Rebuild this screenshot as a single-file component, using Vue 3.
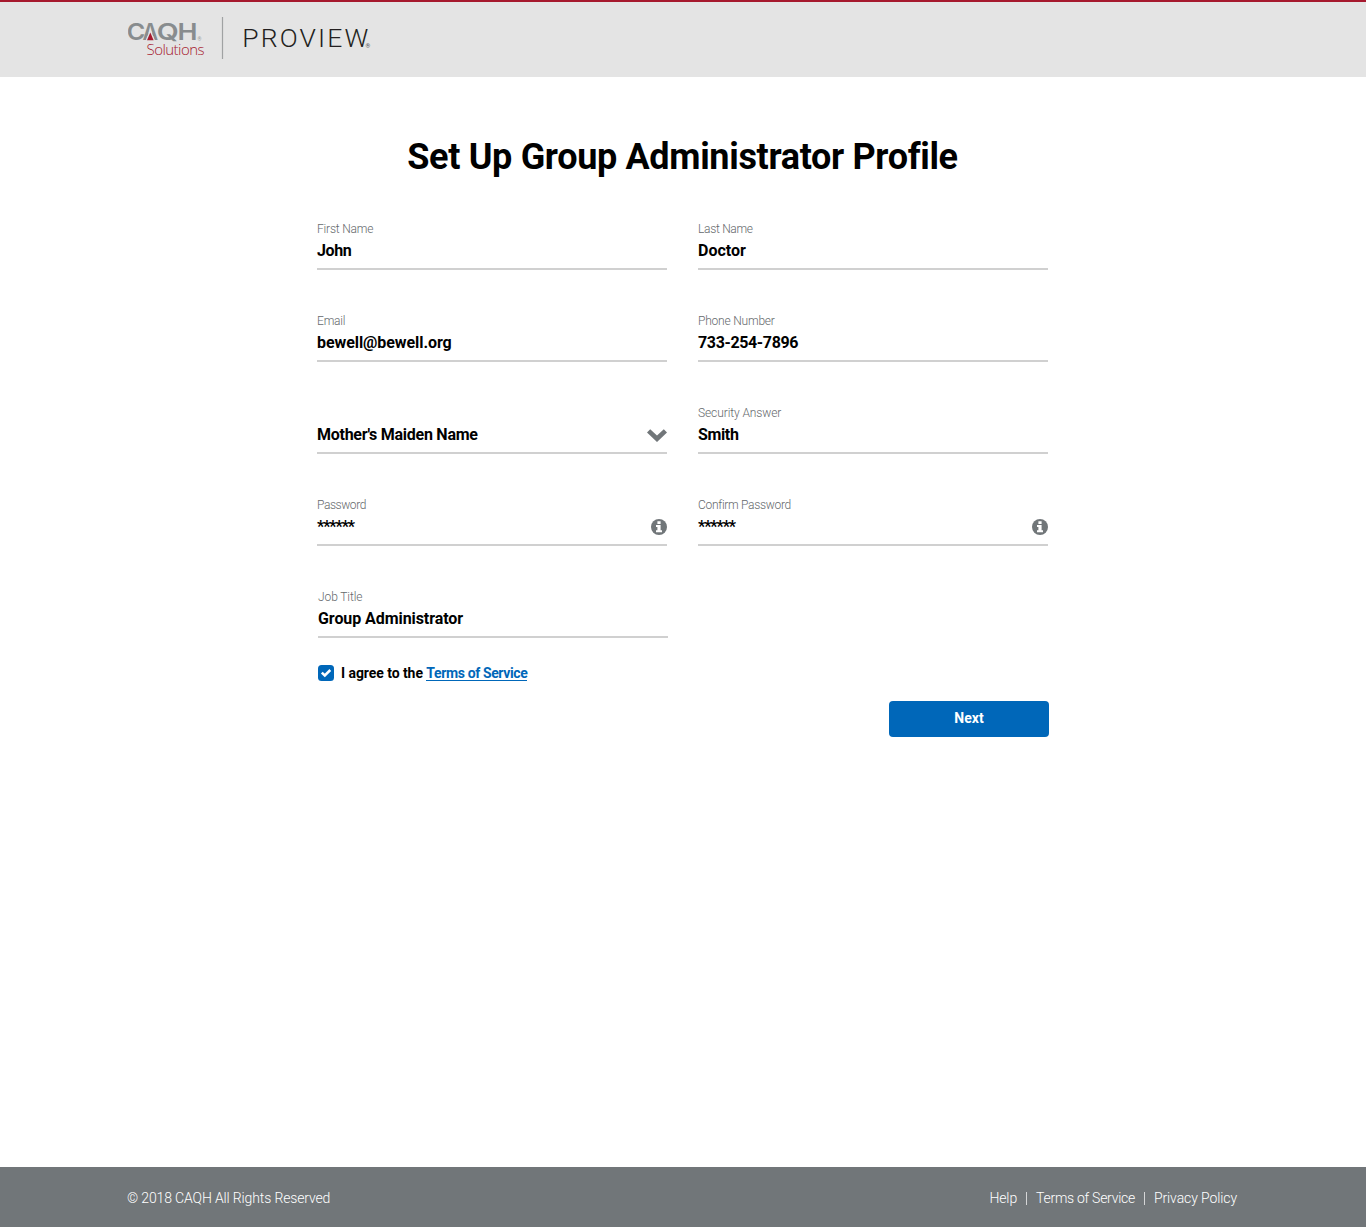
<script setup>
const rows = [
  [
    { id: 'first', label: 'First Name', value: 'John' },
    { id: 'last', label: 'Last Name', value: 'Doctor' },
  ],
  [
    { id: 'email', label: 'Email', value: 'bewell@bewell.org' },
    { id: 'phone', label: 'Phone Number', value: '733-254-7896' },
  ],
  [
    { id: 'question', label: '', value: "Mother's Maiden Name", icon: 'chevron' },
    { id: 'answer', label: 'Security Answer', value: 'Smith' },
  ],
  [
    { id: 'password', label: 'Password', value: '******', icon: 'info' },
    { id: 'confirm', label: 'Confirm Password', value: '******', icon: 'info' },
  ],
  [{ id: 'job', label: 'Job Title', value: 'Group Administrator' }],
]
</script>

<template>
  <div class="page">
    <header class="header">
      <svg class="brand" width="250" height="46" viewBox="0 0 250 46">
        <g class="caqh">
          <text x="-1.2" y="25.3" textLength="18.5" lengthAdjust="spacingAndGlyphs">C</text>
          <text x="14.6" y="25.3" textLength="15.6" lengthAdjust="spacingAndGlyphs">A</text>
          <text x="28.8" y="25.3" textLength="22" lengthAdjust="spacingAndGlyphs">Q</text>
          <text x="49.6" y="25.3" textLength="20" lengthAdjust="spacingAndGlyphs">H</text>
        </g>
        <path d="M22.3 15.5 L18.4 25.5 H26.2 Z" fill="#e4e4e4" stroke="#e4e4e4" stroke-width="1.2" />
        <path d="M22.3 17.5 L19 25.3 H25.6 Z" fill="#a6192e" />
        <text class="reg" x="69.5" y="25.5">®</text>
        <text class="solutions" x="18.5" y="40.3" textLength="58">Solutions</text>
        <path d="M94.5 2 V44" stroke="#a0a2a3" stroke-width="1.2" />
        <text class="proview" x="114.2" y="32.2" textLength="126">PROVIEW</text>
        <text class="reg dark" x="237.6" y="32.5">®</text>
      </svg>
    </header>

    <main class="content">
      <h1>Set Up Group Administrator Profile</h1>
      <form class="form" @submit.prevent>
        <div v-for="(row, i) in rows" :key="i" class="row">
          <div v-for="field in row" :key="field.id" class="field" :class="field.id">
            <div class="label">{{ field.label }}</div>
            <div class="control">
              <span class="value">{{ field.value }}</span>
              <svg v-if="field.icon === 'chevron'" class="chevron" width="20" height="13" viewBox="0 0 20 13">
                <path d="M3.2 0.3 L10 6.4 L16.8 0.3 L20 3.5 L10 13 L0 3.5 Z" fill="#717679" />
              </svg>
              <svg v-if="field.icon === 'info'" class="info" width="16" height="16" viewBox="0 0 16 16">
                <circle cx="8" cy="8" r="8" fill="#717679" />
                <path d="M6.4 2.2 H9.6 V4.9 H6.4 Z M5 6 H9.6 V11.3 H11 V13.3 H5 V11.3 H6.4 V8 H5 Z" fill="#fff" />
              </svg>
            </div>
          </div>
        </div>
        <div class="agree">
          <svg width="16" height="16" viewBox="0 0 16 16">
            <rect width="16" height="16" rx="3.5" fill="#0067b9" />
            <path d="M3.8 7.6 L6.8 10.5 L12.3 5" fill="none" stroke="#fff" stroke-width="2.5" />
          </svg>
          <span class="terms">I agree to the <a>Terms of Service</a></span>
        </div>
        <button class="next" type="submit">Next</button>
      </form>
    </main>

    <footer class="footer">
      <span class="copyright">© 2018 CAQH All Rights Reserved</span>
      <nav class="links">
        <a class="help">Help</a>
        <i></i>
        <a class="tos">Terms of Service</a>
        <i></i>
        <a class="privacy">Privacy Policy</a>
      </nav>
    </footer>
  </div>
</template>

<style>
body {
  margin: 0;
}
</style>

<style scoped>
.page {
  display: flex;
  flex-direction: column;
  height: 1227px;
  background: #fff;
  color: #000;
  font-family: Roboto, "Liberation Sans", sans-serif;
}
.header {
  box-sizing: border-box;
  height: 77px;
  flex: none;
  padding: 13px 0 0 128px;
  border-top: 2px solid #a6192e;
  background: #e4e4e4;
}
.brand {
  display: block;
}
.caqh {
  font-family: Inter, sans-serif;
  font-size: 23px;
  font-weight: 600;
  fill: #888c8e;
}
.reg {
  font-size: 5px;
  fill: #9a9c9e;
}
.reg.dark {
  font-size: 6px;
  fill: #555;
}
.solutions {
  font-family: "Open Sans", sans-serif;
  font-size: 15px;
  font-weight: 300;
  fill: #a6192e;
}
.proview {
  font-size: 26.5px;
  font-weight: 300;
  fill: #231f20;
}
.content {
  flex: 1;
  width: 731px;
  margin-left: 317px;
}
h1 {
  margin: 58px 0 0;
  line-height: 44px;
  font-size: 36px;
  font-weight: 700;
  letter-spacing: -0.33px;
  text-align: center;
  white-space: nowrap;
}
.form {
  display: flex;
  flex-direction: column;
  padding-top: 43px;
}
.row {
  display: flex;
  gap: 31px;
  height: 92px;
}
.field {
  width: 350px;
}
.field.job {
  margin-left: 1px;
}
.label {
  height: 14px;
  line-height: 14px;
  font-size: 12px;
  font-weight: 300;
  letter-spacing: -0.2px;
  color: #65696c;
}
.last .label,
.confirm .label {
  letter-spacing: -0.3px;
}
.password .label {
  letter-spacing: -0.42px;
}
.answer .label,
.job .label {
  letter-spacing: -0.1px;
}
.control {
  display: flex;
  justify-content: space-between;
  align-items: center;
  height: 32px;
  border-bottom: 2px solid #d0d0d0;
}
.value {
  line-height: 20px;
  margin-bottom: 3px;
  font-size: 16px;
  font-weight: 700;
}
.first .value,
.phone .value,
.answer .value {
  letter-spacing: -0.36px;
}
.email .value,
.job .value {
  letter-spacing: -0.07px;
}
.question .value {
  letter-spacing: -0.26px;
}
.password .value,
.confirm .value {
  letter-spacing: -1.1px;
}
.chevron,
.info {
  margin-bottom: 2px;
}
.agree {
  display: flex;
  align-items: center;
  gap: 7px;
  height: 16px;
  margin: -17px 0 0 1px;
}
.terms {
  height: 16px;
  font-size: 14px;
  font-weight: 700;
  line-height: 16px;
  letter-spacing: -0.06px;
}
.terms a {
  display: inline-block;
  height: 15px;
  color: #0067b9;
  letter-spacing: -0.37px;
  border-bottom: 1px solid #0067b9;
}
.next {
  align-self: flex-end;
  width: 160px;
  height: 36px;
  margin: 20px -1px 0 0;
  padding: 0 0 2px;
  border: 0;
  border-radius: 4px;
  background: #0067b9;
  color: #fff;
  font: 700 14px/34px Roboto, sans-serif;
}
.footer {
  display: flex;
  justify-content: space-between;
  align-items: center;
  box-sizing: border-box;
  height: 60px;
  flex: none;
  padding: 2px 129px 0 127px;
  background: #717679;
  color: #fff;
  font-size: 14px;
  font-weight: 300;
}
.copyright {
  letter-spacing: -0.14px;
}
.links {
  display: flex;
  align-items: center;
}
.links i {
  width: 1px;
  height: 13px;
  margin: 0 9px;
  background: #d5d6d7;
}
.help,
.privacy {
  letter-spacing: -0.1px;
}
.tos {
  letter-spacing: -0.27px;
}
</style>
